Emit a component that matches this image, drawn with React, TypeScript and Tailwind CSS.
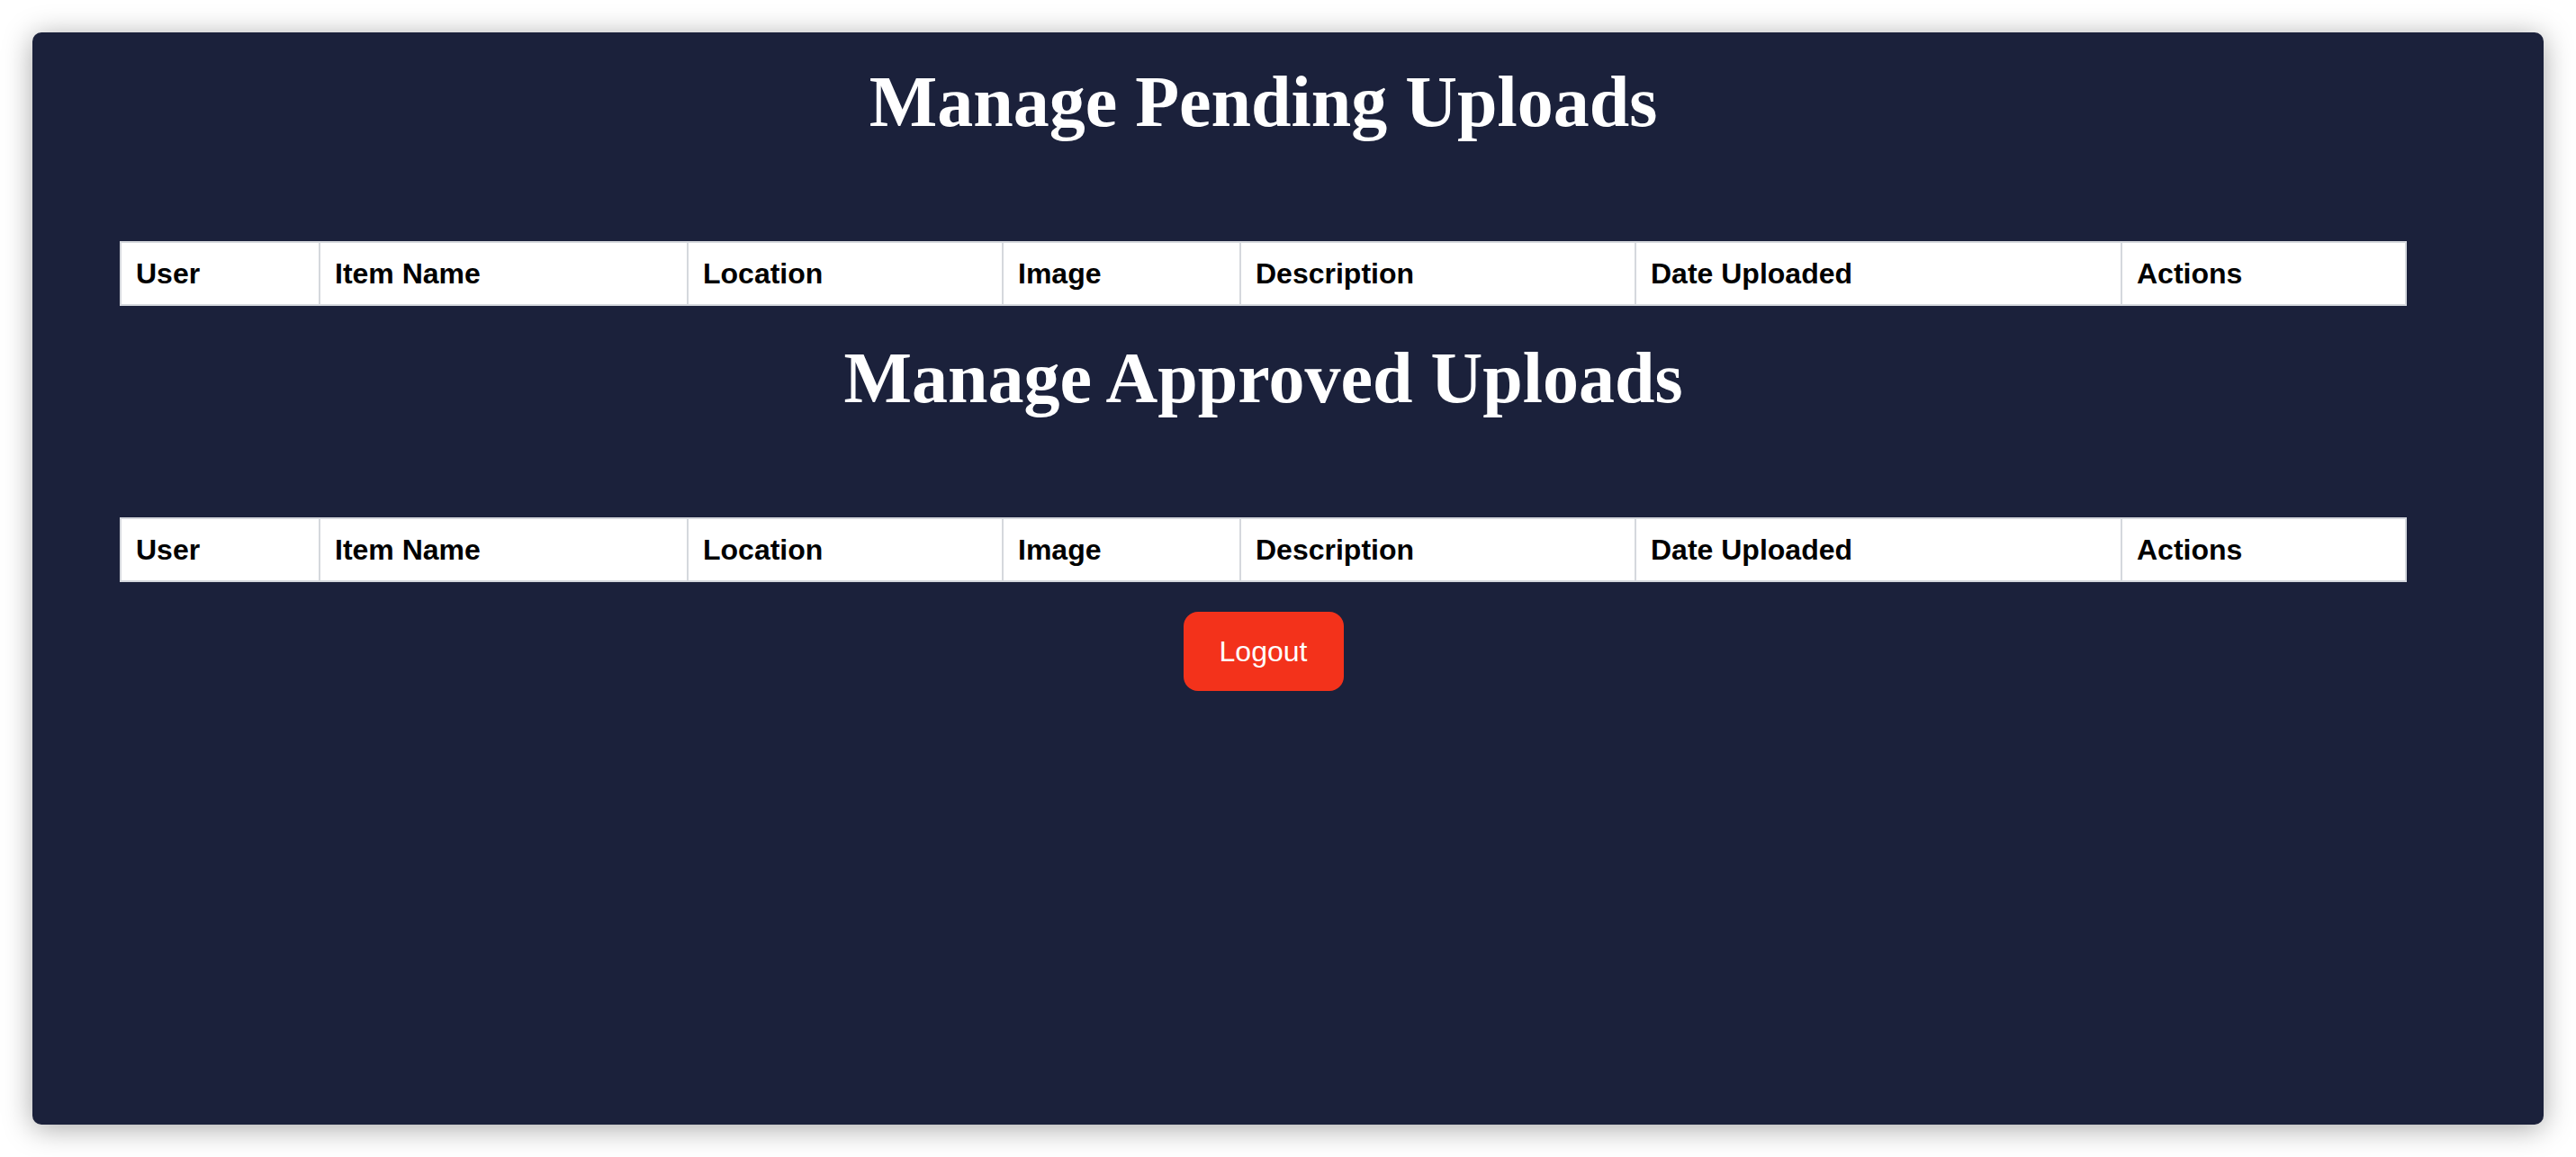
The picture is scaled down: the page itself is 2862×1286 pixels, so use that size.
import React from "react";

const cols = [
  { name: "User", w: 221 },
  { name: "Item Name", w: 409 },
  { name: "Location", w: 350 },
  { name: "Image", w: 264 },
  { name: "Description", w: 439 },
  { name: "Date Uploaded", w: 540 },
  { name: "Actions", w: 316 },
];

function UploadTable() {
  return (
    <table className="table-fixed border-collapse bg-white w-[2539px]">
      <colgroup>
        {cols.map((c) => (
          <col key={c.name} style={{ width: c.w }} />
        ))}
      </colgroup>
      <thead>
        <tr>
          {cols.map((c) => (
            <th
              key={c.name}
              className="border-2 border-[#d5d8dd] px-[16px] py-[16px] text-left text-[32px] leading-[36px] font-bold text-black font-['Liberation_Sans',Arial,sans-serif]"
            >
              {c.name}
            </th>
          ))}
        </tr>
      </thead>
      <tbody></tbody>
    </table>
  );
}

function Section({ title }: { title: string }) {
  return (
    <div className="flex flex-col items-center w-full mb-[34px]">
      <h1 className="text-[80px] leading-[92px] font-bold text-white mb-[109px] font-['Liberation_Serif','Times_New_Roman',serif]">
        {title}
      </h1>
      <UploadTable />
    </div>
  );
}

export default function App() {
  return (
    <div className="w-[2862px] h-[1286px] bg-white p-[36px]">
      <div className="w-[2790px] h-[1214px] bg-[#1b213b] rounded-[10px] shadow-[0_4px_32px_rgba(0,0,0,0.35)] pl-[98px] pr-[153px] pt-[31px]">
        <div className="flex flex-col items-center w-[2539px]">
          <Section title="Manage Pending Uploads" />
          <Section title="Manage Approved Uploads" />
          <button className="-mt-[1px] w-[178px] h-[88px] rounded-[16px] bg-[#f3321b] text-white text-[32px] font-['Liberation_Sans',Arial,sans-serif]">
            Logout
          </button>
        </div>
      </div>
    </div>
  );
}
